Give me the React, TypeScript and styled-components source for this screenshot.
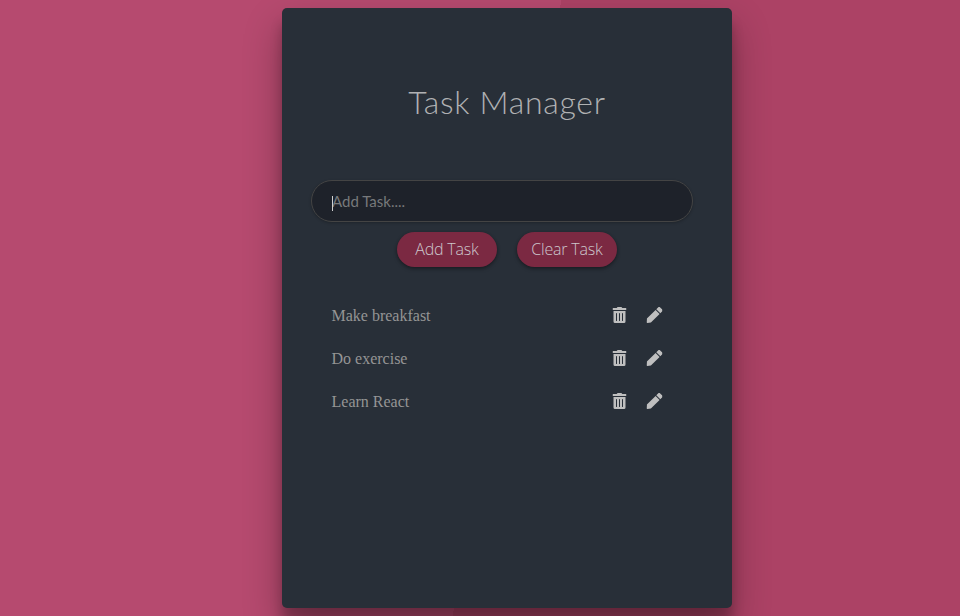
import React from "react";
import styled, { createGlobalStyle } from "styled-components";
import { FaPen, FaTrashAlt } from "react-icons/fa";

const GlobalStyle = createGlobalStyle`
  * { box-sizing: border-box; }
  body { margin: 0; }
`;

const Page = styled.div`
  height: 616px;
  padding: 8px 0 0 282px;
  overflow: hidden;
  background: linear-gradient(100deg, #b64a6f 50%, #ac4265 50%) 0 0 / 1014px 616px no-repeat;
`;

const Card = styled.main`
  width: 450px;
  height: 600px;
  padding: 75px 39px 0 29px;
  border-radius: 5px;
  background: #282f38;
  box-shadow: 0 19px 38px rgba(0, 0, 0, 0.3), 0 15px 12px rgba(0, 0, 0, 0.22);
`;

const Title = styled.h1`
  height: 97px;
  margin: 0 -10px 0 0;
  color: #b0b1b3;
  font: 300 32px/38px Lato, "Liberation Sans", sans-serif;
  letter-spacing: 0.7px;
  text-align: center;
  white-space: nowrap;
`;

const Field = styled.div`
  position: relative;
  height: 42px;
`;

const Input = styled.input`
  display: block;
  width: 382px;
  height: 42px;
  padding: 0 20px;
  border: 1px solid #444444;
  border-radius: 21px;
  outline: none;
  background: #1e222a;
  color: #bfbfbf;
  box-shadow: 0 1px 3px rgba(0, 0, 0, 0.24);
  font: 400 15px Lato, "Liberation Sans", sans-serif;
  &::placeholder { color: #77797b; opacity: 1; }
`;

const Caret = styled.span`
  position: absolute;
  left: 21px;
  top: 16px;
  width: 1px;
  height: 15px;
  background: #d0d0d0;
`;

const Actions = styled.div`
  display: flex;
  justify-content: center;
  gap: 20px;
  margin: 10px -10px 0 0;
`;

const Button = styled.button`
  width: 100px;
  height: 35px;
  padding: 0 0 1px;
  border: 0;
  border-radius: 18px;
  background: #7b2942;
  color: #cdc6cc;
  box-shadow: 0 1px 3px rgba(0, 0, 0, 0.24), 0 2px 4px rgba(0, 0, 0, 0.24);
  font: 300 16px "Open Sans", sans-serif;
  letter-spacing: -0.2px;
  white-space: nowrap;
`;

const List = styled.ul`
  margin: 27px 0 0;
  padding: 0 31px 0 20.5px;
  list-style: none;
`;

const Row = styled.li`
  display: flex;
  align-items: center;
  height: 43px;
  color: #959595;
  font: 16px "Liberation Serif", serif;
`;

const Name = styled.span`
  flex: 1;
`;

const Icons = styled.span`
  display: flex;
  gap: 20px;
  padding-bottom: 2px;
  color: #bfbfbf;
  transform: translateX(0.5px);
  svg { display: block; height: 16px; }
  svg:first-child { width: 14px; }
`;

const tasks = ["Make breakfast", "Do exercise", "Learn React"];

export default function App() {
  return (
    <>
      <GlobalStyle />
      <Page>
        <Card>
          <Title>Task Manager</Title>
          <Field>
            <Input placeholder="Add Task...." />
            <Caret />
          </Field>
          <Actions>
            <Button>Add Task</Button>
            <Button>Clear Task</Button>
          </Actions>
          <List>
            {tasks.map((task) => (
              <Row key={task}>
                <Name>{task}</Name>
                <Icons>
                  <FaTrashAlt />
                  <FaPen />
                </Icons>
              </Row>
            ))}
          </List>
        </Card>
      </Page>
    </>
  );
}
